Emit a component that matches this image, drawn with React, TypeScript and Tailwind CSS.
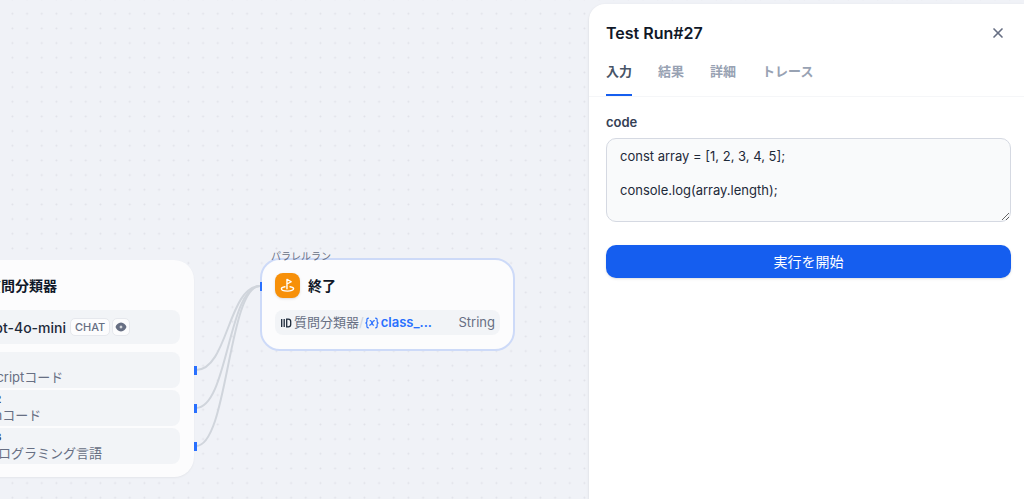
import React, { useState } from 'react';
import { X } from 'lucide-react';

const TABS = ['入力', '結果', '詳細', 'トレース'];

const CLASSES = [
  { label: 'クラス 1', name: 'JavaScriptコード' },
  { label: 'クラス 2', name: 'Pythonコード' },
  { label: 'クラス 3', name: '他のプログラミング言語' },
];

const EyeIcon: React.FC = () => (
  <svg viewBox="0 0 12 12" className="w-3 h-3" fill="#676f83">
    <path
      fillRule="evenodd"
      d="M6 1.600C3.200 1.600 1.200 3.800.5 6c.7 2.200 2.700 4.400 5.500 4.400S10.800 8.200 11.500 6C10.800 3.800 8.800 1.600 6 1.600ZM6 4l.6 1.400L8 6l-1.400.6L6 8l-.6-1.400L4 6l1.400-.6Z"
    />
  </svg>
);

const EndIcon: React.FC = () => (
  <svg viewBox="0 0 14 14" className="w-[15px] h-[15px]" fill="none" stroke="#fff" strokeWidth="1.300" strokeLinecap="round" strokeLinejoin="round">
    <path d="M6.500 10V1.300l4 2.200-4 2.100" />
    <path d="M4.600 8.200C2.700 8.500 1.300 9.200 1.300 10.100c0 1.200 2.500 2.100 5.700 2.100s5.700-.9 5.700-2.100c0-.9-1.400-1.600-3.300-1.900" />
  </svg>
);

const ClassifierIcon: React.FC = () => (
  <svg viewBox="0 0 12 12" className="w-3 h-3 shrink-0" fill="none" stroke="#1d2939" strokeWidth="1.300">
    <path d="M1.700 2v8M4.200 2v8M6.700 2.200h1.600c1.400 0 2.400 1 2.400 2.300v3c0 1.300-1 2.300-2.400 2.300H6.700Z" />
  </svg>
);

const VariableIcon: React.FC = () => (
  <svg viewBox="0 0 14 12" className="w-[14px] h-3 shrink-0" fill="none" stroke="#2970ff" strokeWidth="1.200" strokeLinecap="round" strokeLinejoin="round">
    <path d="M3.400 1.200c-1.200 0-1.500.5-1.500 1.400v1.700c0 .9-.3 1.400-1.100 1.700.8.3 1.100.8 1.100 1.700v1.700c0 .9.3 1.400 1.500 1.400" />
    <path d="M10.600 1.200c1.200 0 1.500.5 1.500 1.400v1.700c0 .9.3 1.400 1.100 1.700-.8.3-1.100.8-1.100 1.700v1.700c0 .9-.3 1.400-1.500 1.400" />
    <path d="M5.200 3.700c1.900-.5 1.700 4.800 3.400 4.500M9.300 3.700C7.600 3.600 6.600 8.300 4.700 8.200" />
  </svg>
);

const Canvas: React.FC = () => (
  <div className="absolute inset-0 overflow-hidden">
    <svg className="absolute inset-0 w-full h-full">
      <defs>
        <pattern id="dots" x="5.100" y="6.400" width="14.667" height="14.667" patternUnits="userSpaceOnUse">
          <circle cx="7.333" cy="7.333" r="1" fill="#dfe1e8" />
        </pattern>
      </defs>
      <rect width="100%" height="100%" fill="url(#dots)" />
      {/* Edges */}
      <g fill="none" stroke="#d0d5dc" strokeWidth="2">
        <path d="M196 370C228 370 228 286 260 286" />
        <path d="M196 408C228 408 228 286 260 286" />
        <path d="M196 446C228 446 228 286 260 286" />
      </g>
      <g fill="#2970ff">
        <rect x="194" y="366" width="3" height="9" />
        <rect x="194" y="404" width="3" height="9" />
        <rect x="194" y="442" width="3" height="9" />
      </g>
    </svg>

    {/* Question classifier node */}
    <section className="absolute left-[-60px] top-[260px] w-[254px] rounded-[20px] bg-[#fcfcfd] shadow-xs px-[14px] pt-[13px] pb-[13px]">
      <div className="flex items-center gap-2">
        <span className="w-[25px] h-[25px] rounded-lg bg-green-500" />
        <h2 className="text-[14px] leading-5 font-bold text-[#101828]">質問分類器</h2>
      </div>
      <div className="mt-3 flex items-center gap-[2px] h-[34px] px-2 rounded-lg bg-[#f2f4f7]">
        <span className="w-5 h-5 mr-1 shrink-0 rounded bg-emerald-600" />
        <span className="w-[78px] mr-[2px] flex justify-end text-[14px] font-medium text-[#1d2939] whitespace-nowrap">gpt-4o-mini</span>
        <span className="h-[18px] px-1 flex items-center rounded-[5px] border border-[#e6e8ed] bg-[#fcfcfd] text-[11px] font-medium text-[#676f83]">CHAT</span>
        <span className="h-[18px] w-[18px] flex items-center justify-center rounded-[5px] border border-[#e6e8ed] bg-[#fcfcfd]">
          <EyeIcon />
        </span>
      </div>
      <ul className="mt-2 flex flex-col gap-[2px]">
        {CLASSES.map((item) => (
          <li key={item.label} className="h-9 px-[5px] pt-[1px] rounded-lg bg-[#f2f4f7]">
            <div className="text-[11px] leading-4 font-semibold text-[#344054]">{item.label}</div>
            <div className="text-[13px] leading-4 text-[#676f83] whitespace-nowrap">{item.name}</div>
          </li>
        ))}
      </ul>
    </section>

    {/* End node */}
    <section className="absolute left-[260px] top-[258px] w-[255px] rounded-[20px] border-2 border-[#cddaf8] bg-[#fcfcfd] px-[13px] pt-[13px] pb-[14px]">
      <span className="absolute left-[-2px] top-[22px] w-[2px] h-[9px] bg-[#2970ff]" />
      <div className="flex items-center gap-2">
        <span className="w-[25px] h-[25px] rounded-lg bg-[#f79009] shadow-sm flex items-center justify-center">
          <EndIcon />
        </span>
        <h2 className="text-[14px] leading-5 font-bold text-[#101828]">終了</h2>
      </div>
      <div className="mt-3 h-[25px] px-[5px] flex items-center rounded-lg bg-[#f2f4f7] text-[13px] whitespace-nowrap">
        <ClassifierIcon />
        <span className="ml-[2px] text-[#676f83]">質問分類器</span>
        <span className="mr-[1px] text-[#d0d5dd]">/</span>
        <VariableIcon />
        <span className="ml-[2px] font-semibold text-[#2970ff]">class_...</span>
        <span className="ml-auto text-[#676f83]">String</span>
      </div>
    </section>
    <span className="absolute left-[271px] top-[248px] text-[10px] leading-4 text-[#676f83]">パラレルラン</span>
  </div>
);

const RunPanel: React.FC = () => {
  const [tab, setTab] = useState(TABS[0]);
  const [code, setCode] = useState('const array = [1, 2, 3, 4, 5];\n\nconsole.log(array.length);');

  return (
    <aside className="relative mt-1 w-[435px] max-w-full rounded-tl-2xl bg-white shadow-sm">
      <header className="flex items-center justify-between pl-[17px] pr-[18px] pt-[17px]">
        <h1 className="text-[16px] leading-6 font-semibold text-[#101828]">Test Run#27</h1>
        <button aria-label="閉じる" className="text-[#676f83]">
          <X className="w-4 h-4" strokeWidth={2.5} />
        </button>
      </header>

      <nav className="flex gap-[26px] px-[17px] mt-2 border-b border-[#f5f6f8]">
        {TABS.map((name) => (
          <button
            key={name}
            onClick={() => setTab(name)}
            className={`h-[43px] pb-1 border-b-2 text-[13px] font-semibold ${
              name === tab ? 'border-[#155eef] text-[#475467]' : 'border-transparent text-[#98a2b3]'
            }`}
          >
            {name}
          </button>
        ))}
      </nav>

      <div className="pl-[17px] pr-[13px] pt-[15px]">
        <label htmlFor="code" className="block text-[13px] leading-5 font-semibold text-[#344054]">code</label>
        <textarea
          id="code"
          value={code}
          onChange={(e) => setCode(e.target.value)}
          className="mt-[6px] block w-full h-[84px] px-[13px] py-[9px] rounded-[10px] border border-[#d5d9e2] bg-[#f9fafb] text-[13px] leading-[17px] text-[#1d2939] resize outline-none overflow-hidden"
        />
        <button className="mt-[23px] w-full h-[33px] rounded-[10px] bg-[#155eef] text-[14px] text-white shadow-sm">
          実行を開始
        </button>
      </div>
    </aside>
  );
};

export default function App() {
  return (
    <main className="relative flex justify-end min-h-screen overflow-hidden bg-[#f0f2f7] font-['Inter','Noto_Sans_CJK_JP',sans-serif]">
      <Canvas />
      <RunPanel />
    </main>
  );
}
